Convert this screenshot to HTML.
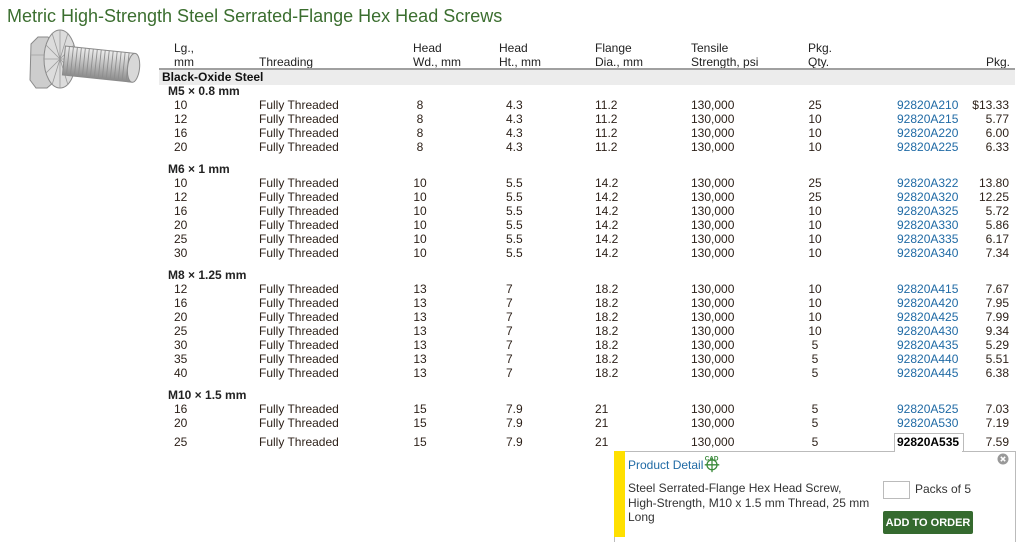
<!DOCTYPE html>
<html><head><meta charset="utf-8"><style>
body{margin:0;width:1021px;height:537px;overflow:hidden;background:#fff;font-family:"Liberation Sans",Arial,sans-serif;font-size:12px;color:#2b1f17;position:relative}
.a{position:absolute;white-space:nowrap;line-height:14px}
.r{position:absolute;left:0;width:1021px;height:14px}
.r span{position:absolute;top:0;line-height:14px;white-space:nowrap}
.l{left:174px}.t{left:259px}.w{left:405px;width:30px;text-align:center}.h{left:506px}.f{left:595px}.s{left:691px}.q{left:800px;width:30px;text-align:center}.p{left:897px;color:#1f6aa5}.c{right:12px;text-align:right}
.hd{color:#222}
#wr{position:absolute;left:0;top:1px;width:1021px;height:537px}
</style></head><body>
<div class="a" style="left:7px;top:5px;font-size:18px;line-height:22px;color:#3b6e2f">Metric High-Strength Steel Serrated-Flange Hex Head Screws</div>
<svg style="position:absolute;left:0;top:0" width="150" height="100" viewBox="0 0 150 100">
<defs><linearGradient id="g" x1="0" y1="0" x2="0" y2="1"><stop offset="0" stop-color="#eee"/><stop offset=".45" stop-color="#c4c4c4"/><stop offset="1" stop-color="#8a8a8a"/></linearGradient></defs>
<polygon points="31,44 38,37 48,37 54,45 54,82 47,88 36,88 30,80" fill="#cdcdcd" stroke="#8a8a8a"/>
<path d="M31,55 L53,55" stroke="#aaa"/>
<ellipse cx="60" cy="59" rx="16" ry="29" fill="#dcdcdc" stroke="#8a8a8a"/>
<g stroke="#9a9a9a" stroke-width="0.8"><path d="M60 30v58M46 45l28 28M46 73l28-28M44 59h32M52 33l16 52M68 33l-16 52"/></g>
<g transform="rotate(6 64 60)">
<rect x="64" y="46" width="70" height="29" fill="url(#g)" stroke="#8a8a8a"/>
<g stroke="#8e8e8e" stroke-width="0.9"><path d="M68 46v29M72 46v29M76 46v29M80 46v29M84 46v29M88 46v29M92 46v29M96 46v29M100 46v29M104 46v29M108 46v29M112 46v29M116 46v29M120 46v29M124 46v29M128 46v29"/></g>
<ellipse cx="134" cy="60.5" rx="6" ry="14.5" fill="#d8d8d8" stroke="#8a8a8a"/>
</g>
</svg>
<div id="wr">
<div class="r hd" style="top:40px"><span style="left:174px">Lg.,</span><span style="left:413px">Head</span><span style="left:499px">Head</span><span style="left:595px">Flange</span><span style="left:691px">Tensile</span><span style="left:808px">Pkg.</span></div>
<div class="r hd" style="top:54px"><span style="left:174px">mm</span><span style="left:259px">Threading</span><span style="left:413px">Wd., mm</span><span style="left:499px">Ht., mm</span><span style="left:595px">Dia., mm</span><span style="left:691px">Strength, psi</span><span style="left:808px">Qty.</span><span style="right:11px">Pkg.</span></div>
<div style="position:absolute;left:159px;top:67px;width:856px;height:15px;background:#ececec;border-top:2px solid #a0a0a0"></div>
<div class="a" style="left:162px;top:69px;font-weight:bold;color:#111">Black-Oxide Steel</div>
<div class="a" style="left:168px;top:83px;font-weight:bold;color:#222">M5 × 0.8 mm</div>
<div class="r" style="top:97px"><span class="l">10</span><span class="t">Fully Threaded</span><span class="w">8</span><span class="h">4.3</span><span class="f">11.2</span><span class="s">130,000</span><span class="q">25</span><span class="p">92820A210</span><span class="c">$13.33</span></div>
<div class="r" style="top:111px"><span class="l">12</span><span class="t">Fully Threaded</span><span class="w">8</span><span class="h">4.3</span><span class="f">11.2</span><span class="s">130,000</span><span class="q">10</span><span class="p">92820A215</span><span class="c">5.77</span></div>
<div class="r" style="top:125px"><span class="l">16</span><span class="t">Fully Threaded</span><span class="w">8</span><span class="h">4.3</span><span class="f">11.2</span><span class="s">130,000</span><span class="q">10</span><span class="p">92820A220</span><span class="c">6.00</span></div>
<div class="r" style="top:139px"><span class="l">20</span><span class="t">Fully Threaded</span><span class="w">8</span><span class="h">4.3</span><span class="f">11.2</span><span class="s">130,000</span><span class="q">10</span><span class="p">92820A225</span><span class="c">6.33</span></div>
<div class="a" style="left:168px;top:161px;font-weight:bold;color:#222">M6 × 1 mm</div>
<div class="r" style="top:175px"><span class="l">10</span><span class="t">Fully Threaded</span><span class="w">10</span><span class="h">5.5</span><span class="f">14.2</span><span class="s">130,000</span><span class="q">25</span><span class="p">92820A322</span><span class="c">13.80</span></div>
<div class="r" style="top:189px"><span class="l">12</span><span class="t">Fully Threaded</span><span class="w">10</span><span class="h">5.5</span><span class="f">14.2</span><span class="s">130,000</span><span class="q">25</span><span class="p">92820A320</span><span class="c">12.25</span></div>
<div class="r" style="top:203px"><span class="l">16</span><span class="t">Fully Threaded</span><span class="w">10</span><span class="h">5.5</span><span class="f">14.2</span><span class="s">130,000</span><span class="q">10</span><span class="p">92820A325</span><span class="c">5.72</span></div>
<div class="r" style="top:217px"><span class="l">20</span><span class="t">Fully Threaded</span><span class="w">10</span><span class="h">5.5</span><span class="f">14.2</span><span class="s">130,000</span><span class="q">10</span><span class="p">92820A330</span><span class="c">5.86</span></div>
<div class="r" style="top:231px"><span class="l">25</span><span class="t">Fully Threaded</span><span class="w">10</span><span class="h">5.5</span><span class="f">14.2</span><span class="s">130,000</span><span class="q">10</span><span class="p">92820A335</span><span class="c">6.17</span></div>
<div class="r" style="top:245px"><span class="l">30</span><span class="t">Fully Threaded</span><span class="w">10</span><span class="h">5.5</span><span class="f">14.2</span><span class="s">130,000</span><span class="q">10</span><span class="p">92820A340</span><span class="c">7.34</span></div>
<div class="a" style="left:168px;top:267px;font-weight:bold;color:#222">M8 × 1.25 mm</div>
<div class="r" style="top:281px"><span class="l">12</span><span class="t">Fully Threaded</span><span class="w">13</span><span class="h">7</span><span class="f">18.2</span><span class="s">130,000</span><span class="q">10</span><span class="p">92820A415</span><span class="c">7.67</span></div>
<div class="r" style="top:295px"><span class="l">16</span><span class="t">Fully Threaded</span><span class="w">13</span><span class="h">7</span><span class="f">18.2</span><span class="s">130,000</span><span class="q">10</span><span class="p">92820A420</span><span class="c">7.95</span></div>
<div class="r" style="top:309px"><span class="l">20</span><span class="t">Fully Threaded</span><span class="w">13</span><span class="h">7</span><span class="f">18.2</span><span class="s">130,000</span><span class="q">10</span><span class="p">92820A425</span><span class="c">7.99</span></div>
<div class="r" style="top:323px"><span class="l">25</span><span class="t">Fully Threaded</span><span class="w">13</span><span class="h">7</span><span class="f">18.2</span><span class="s">130,000</span><span class="q">10</span><span class="p">92820A430</span><span class="c">9.34</span></div>
<div class="r" style="top:337px"><span class="l">30</span><span class="t">Fully Threaded</span><span class="w">13</span><span class="h">7</span><span class="f">18.2</span><span class="s">130,000</span><span class="q">5</span><span class="p">92820A435</span><span class="c">5.29</span></div>
<div class="r" style="top:351px"><span class="l">35</span><span class="t">Fully Threaded</span><span class="w">13</span><span class="h">7</span><span class="f">18.2</span><span class="s">130,000</span><span class="q">5</span><span class="p">92820A440</span><span class="c">5.51</span></div>
<div class="r" style="top:365px"><span class="l">40</span><span class="t">Fully Threaded</span><span class="w">13</span><span class="h">7</span><span class="f">18.2</span><span class="s">130,000</span><span class="q">5</span><span class="p">92820A445</span><span class="c">6.38</span></div>
<div class="a" style="left:168px;top:387px;font-weight:bold;color:#222">M10 × 1.5 mm</div>
<div class="r" style="top:401px"><span class="l">16</span><span class="t">Fully Threaded</span><span class="w">15</span><span class="h">7.9</span><span class="f">21</span><span class="s">130,000</span><span class="q">5</span><span class="p">92820A525</span><span class="c">7.03</span></div>
<div class="r" style="top:415px"><span class="l">20</span><span class="t">Fully Threaded</span><span class="w">15</span><span class="h">7.9</span><span class="f">21</span><span class="s">130,000</span><span class="q">5</span><span class="p">92820A530</span><span class="c">7.19</span></div>
<div style="position:absolute;left:894px;top:432px;width:68px;height:19px;border:1px solid #bbb;border-bottom:none;background:#fff"></div>
<div class="r" style="top:434px"><span class="l">25</span><span class="t">Fully Threaded</span><span class="w">15</span><span class="h">7.9</span><span class="f">21</span><span class="s">130,000</span><span class="q">5</span><span class="p" style="color:#000;font-weight:bold">92820A535</span><span class="c">7.59</span></div>
</div>
<div style="position:absolute;left:614px;top:451px;width:400px;height:90px;border:1px solid #bbb;border-bottom:none;background:#fff"></div>
<div style="position:absolute;left:895px;top:451px;width:67px;height:1px;background:#fff"></div>
<div style="position:absolute;left:614px;top:451px;width:11px;height:86px;background:#ffe000"></div>
<div class="a" style="left:628px;top:458px;color:#1f6aa5">Product Detail</div>
<svg style="position:absolute;left:702px;top:453px" width="20" height="20" viewBox="0 0 22 20"><circle cx="11" cy="12" r="5.5" fill="none" stroke="#3a8a3a" stroke-width="1.4"/><path d="M11 4v16M3 12h16" stroke="#3a8a3a" stroke-width="1.4"/><text x="3" y="7" font-size="7" font-family="Liberation Sans" font-weight="bold" fill="#3a8a3a">CAD</text></svg>
<svg style="position:absolute;left:997px;top:453px" width="12" height="12" viewBox="0 0 12 12"><circle cx="6" cy="6" r="5.5" fill="#999"/><path d="M3.8 3.8l4.4 4.4M8.2 3.8l-4.4 4.4" stroke="#fff" stroke-width="1.5"/></svg>
<div class="a" style="left:628px;top:481px;color:#333;line-height:14.5px">Steel Serrated-Flange Hex Head Screw,<br>High-Strength, M10 x 1.5 mm Thread, 25 mm<br>Long</div>
<div style="position:absolute;left:883px;top:481px;width:25px;height:16px;border:1px solid #bbb"></div>
<div class="a" style="left:915px;top:482px;color:#333">Packs of 5</div>
<div style="position:absolute;left:883px;top:511px;width:90px;height:23px;background:#356a2f;border-radius:2px;color:#fff;font-weight:bold;font-size:11px;line-height:24px;text-align:center">ADD TO ORDER</div>
</body></html>
